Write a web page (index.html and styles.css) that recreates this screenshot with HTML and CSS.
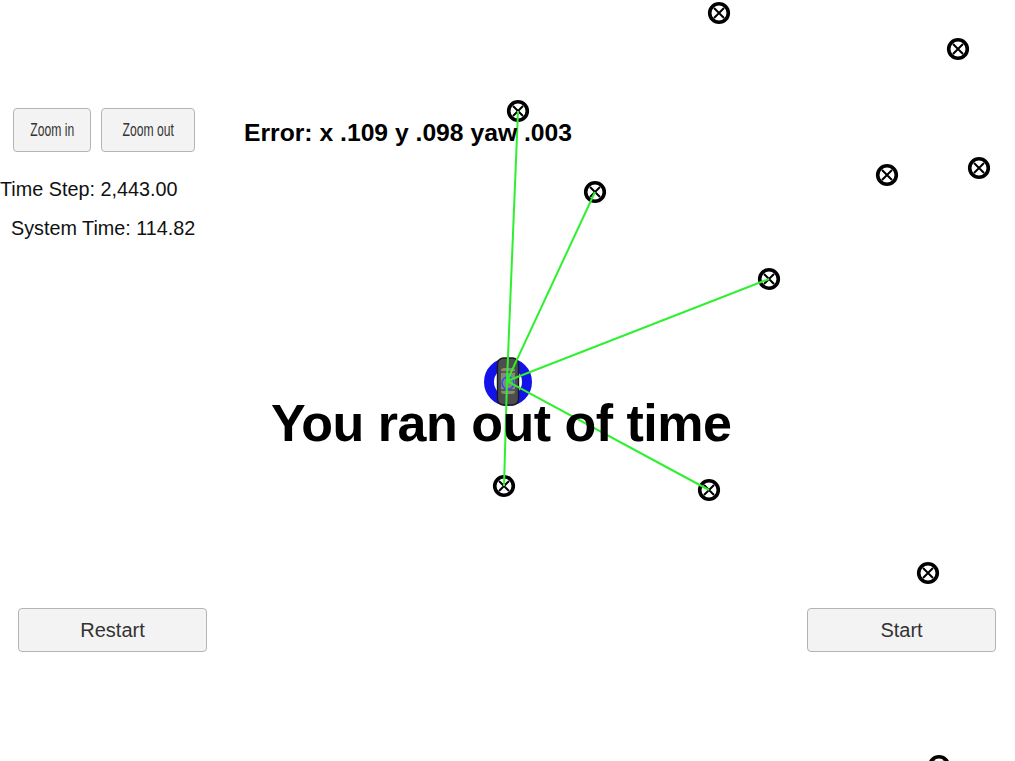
FILE: index.html
```html
<!DOCTYPE html>
<html lang="en">
<head>
<meta charset="utf-8">
<title>Particle Filter</title>
<link rel="stylesheet" href="styles.css">
</head>
<body>
<div class="stage">
  <svg class="scene" width="1015" height="761" viewBox="0 0 1015 761" xmlns="http://www.w3.org/2000/svg">
    <defs>
      <g id="lm">
        <circle r="9.3" fill="#fff" stroke="#000" stroke-width="3.6"/>
        <path d="M-5 -5 L5 5 M5 -5 L-5 5" stroke="#000" stroke-width="2"/>
      </g>
    </defs>
    <g class="landmarks">
      <use href="#lm" x="719" y="13"/>
      <use href="#lm" x="958" y="49"/>
      <use href="#lm" x="518" y="111"/>
      <use href="#lm" x="595" y="192"/>
      <use href="#lm" x="887" y="175"/>
      <use href="#lm" x="979" y="168"/>
      <use href="#lm" x="769" y="279"/>
      <use href="#lm" x="504" y="486"/>
      <use href="#lm" x="709" y="490"/>
      <use href="#lm" x="928" y="573"/>
      <use href="#lm" x="939" y="766"/>
    </g>
    <circle cx="508" cy="382" r="19" fill="none" stroke="#1313e8" stroke-width="10"/>
    <g class="car">
      <rect x="497.5" y="358" width="21" height="47" rx="6" fill="#4d4d4d" stroke="#1a1a1a" stroke-width="1.4"/>
      <rect x="501" y="368" width="14" height="26" rx="3" fill="#8a8878"/>
      <path d="M501 372 L515 372 M501 390 L515 390" stroke="#2a2a2a" stroke-width="1"/>
      <circle cx="508" cy="383" r="6" fill="none" stroke="#2a4cff" stroke-width="1.5"/>
    </g>
    <g class="obs" stroke="#2ef02e" stroke-width="2">
      <line x1="507" y1="381" x2="518" y2="111"/>
      <line x1="507" y1="381" x2="595" y2="192"/>
      <line x1="507" y1="381" x2="769" y2="279"/>
      <line x1="507" y1="381" x2="504" y2="486"/>
      <line x1="507" y1="381" x2="709" y2="490"/>
    </g>
  </svg>

  <div class="hud">
    <div class="zoom-row">
      <button class="btn btn-zoom-in"><span class="narrow">Zoom in</span></button>
      <button class="btn btn-zoom-out"><span class="narrow">Zoom out</span></button>
    </div>
    <div class="stats">
      <div class="stat stat-step">Time Step: 2,443.00</div>
      <div class="stat stat-sys">System Time: 114.82</div>
    </div>
    <div class="bottom-bar">
      <button class="btn btn-wide btn-restart">Restart</button>
      <button class="btn btn-wide btn-start">Start</button>
    </div>

    <div class="error">Error: x .109 y .098 yaw .003</div>
    <div class="message">You ran out of time</div>
  </div>
</div>
</body>
</html>
```

FILE: styles.css
```css
html, body {
  margin: 0;
  padding: 0;
  background: #ffffff;
}

.stage {
  position: relative;
  width: 1015px;
  height: 761px;
  overflow: hidden;
  font-family: "Liberation Sans", Arial, sans-serif;
  color: #000;
}

.scene {
  position: absolute;
  left: 0;
  top: 0;
  z-index: 0;
}

.hud {
  position: relative;
  z-index: 1;
  height: 100%;
  display: flex;
  flex-direction: column;
}

.btn {
  box-sizing: border-box;
  height: 44px;
  margin: 0;
  padding: 0;
  display: flex;
  align-items: center;
  justify-content: center;
  background: #f3f3f3;
  border: 1.5px solid #b4b4b4;
  border-radius: 4px;
  font-family: "Liberation Sans", Arial, sans-serif;
  color: #333;
  white-space: nowrap;
  overflow: hidden;
}

.zoom-row {
  display: flex;
  gap: 10px;
  padding: 108px 0 0 13px;
}

.btn-zoom-in { width: 78px; font-size: 19px; }
.btn-zoom-out { width: 94px; font-size: 19px; }

.narrow {
  display: inline-block;
  transform: scaleX(0.64);
}

.stats {
  display: flex;
  flex-direction: column;
  gap: 15px;
  margin-top: 25px;
}

.stat {
  font-size: 19.8px;
  line-height: 24px;
  color: #111;
  white-space: nowrap;
}

.stat-step { padding-left: 0; }
.stat-sys { padding-left: 11px; }

.bottom-bar {
  margin-top: auto;
  display: flex;
  justify-content: space-between;
  padding: 0 19px 109px 18px;
}

.btn-wide {
  width: 189px;
  font-size: 20px;
}

.error {
  position: absolute;
  left: 244px;
  top: 121px;
  font-size: 24.7px;
  line-height: 24px;
  font-weight: bold;
  white-space: nowrap;
}

.message {
  position: absolute;
  left: 271px;
  top: 397px;
  font-size: 52px;
  line-height: 52px;
  font-weight: bold;
  letter-spacing: -0.5px;
  white-space: nowrap;
}
```
